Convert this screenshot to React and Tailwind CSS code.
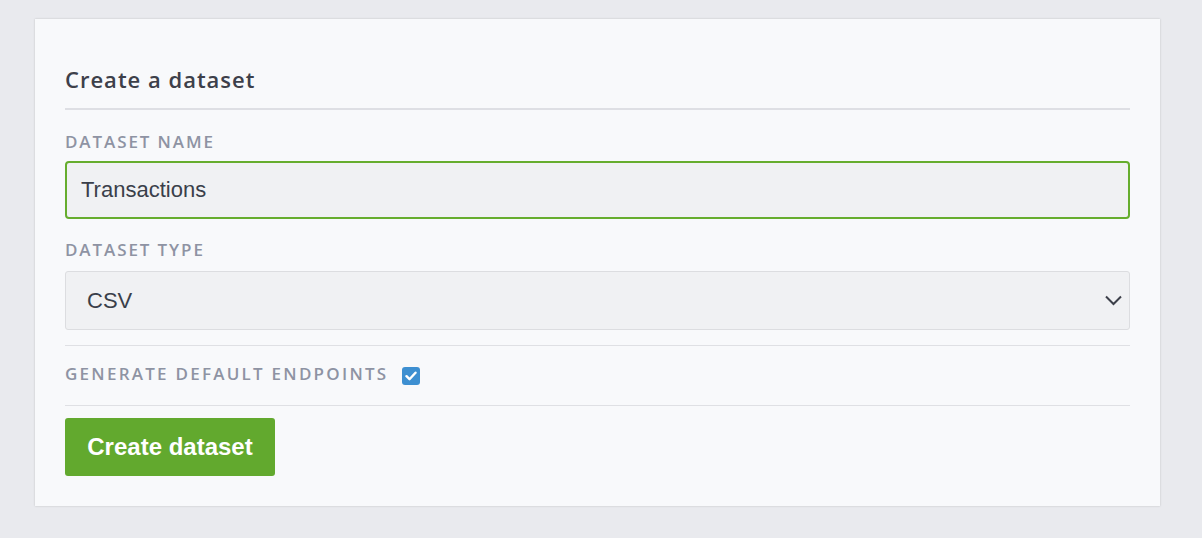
import { useState } from 'react';

const App = () => {
    const [name, setName] = useState('Transactions');
    const [type, setType] = useState('CSV');
    const [endpoints, setEndpoints] = useState(true);

    return (
        <div className="min-h-screen bg-[#e9eaee] pt-[19px] pl-[35px] pr-[42px] pb-8">
            <div className="bg-[#f8f9fb] shadow-[0_0_2px_rgba(0,0,0,0.18)] px-[30px] pt-[43px] pb-[30px]">
                {/* Header */}
                <h1 className="text-[22px] tracking-[1px] font-semibold text-[#3d404a] leading-[34px] pb-[12px] border-b-2 border-[#dedfe4] font-['Open_Sans','Noto_Sans',sans-serif]">
                    Create a dataset
                </h1>

                {/* Name */}
                <label className="block mt-[22px] mb-[9px] text-[17px] leading-[20px] tracking-[1.9px] text-[#8e93a3] font-semibold uppercase font-['Open_Sans','Noto_Sans',sans-serif]">
                    Dataset name
                </label>
                <input
                    value={name}
                    onChange={(e) => setName(e.target.value)}
                    className="w-full h-[58px] px-[14px] rounded-[4px] border-2 border-[#66ad2e] bg-[#f0f1f3] text-[22px] text-[#3a3f4a] outline-none font-['Liberation_Sans',Arial,sans-serif]"
                />

                {/* Type */}
                <label className="block mt-[21px] mb-[11px] text-[17px] leading-[20px] tracking-[1.9px] text-[#8e93a3] font-semibold uppercase font-['Open_Sans','Noto_Sans',sans-serif]">
                    Dataset type
                </label>
                <div className="relative">
                    <select
                        value={type}
                        onChange={(e) => setType(e.target.value)}
                        className="appearance-none w-full h-[59px] px-[21px] rounded-[3px] border border-[#dcdde0] bg-[#f0f1f3] text-[22px] text-[#3a3f4a] outline-none font-['Liberation_Sans',Arial,sans-serif]"
                    >
                        <option>CSV</option>
                        <option>JSON</option>
                    </select>
                    <svg
                        className="absolute right-[8px] top-[24px] pointer-events-none"
                        width="17"
                        height="11"
                        viewBox="0 0 17 11"
                        fill="none"
                        stroke="#3d404a"
                        strokeWidth="2"
                    >
                        <path d="M1 1.5l7.5 7.5 7.5-7.5" />
                    </svg>
                </div>

                {/* Endpoints */}
                <div className="mt-[15px] border-t border-b border-[#dfe0e4] h-[61px] flex items-center gap-[14px]">
                    <span className="mb-[4px] text-[17px] tracking-[2.25px] text-[#8e93a3] font-semibold uppercase font-['Open_Sans','Noto_Sans',sans-serif]">
                        Generate default endpoints
                    </span>
                    <button
                        onClick={() => setEndpoints(!endpoints)}
                        className={`w-[18px] h-[18px] rounded-[3px] flex items-center justify-center ${endpoints ? 'bg-[#3d8fd1]' : 'bg-white border border-[#b8bcc6]'}`}
                    >
                        {endpoints && (
                            <svg width="12" height="10" viewBox="0 0 12 10" fill="none" stroke="white" strokeWidth="2.4" strokeLinecap="round" strokeLinejoin="round">
                                <path d="M1.5 5.2l3 3 6-6.5" />
                            </svg>
                        )}
                    </button>
                </div>

                <button className="mt-[12px] w-[210px] h-[58px] rounded-[3px] bg-[#62a92e] text-white text-[24px] font-bold font-['Liberation_Sans',Arial,sans-serif]">
                    Create dataset
                </button>
            </div>
        </div>
    );
};

export default App;
